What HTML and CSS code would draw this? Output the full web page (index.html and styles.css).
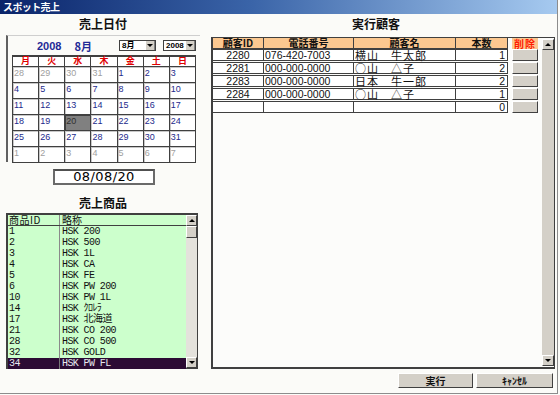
FILE: index.html
```html
<!DOCTYPE html>
<html lang="ja">
<head>
<meta charset="utf-8">
<title>スポット売上</title>
<link rel="stylesheet" href="styles.css">
</head>
<body>
<div class="window">
  <div class="titlebar">スポット売上</div>
  <div class="content">
    <div class="left">
      <h2 class="heading">売上日付</h2>
      <div class="calendar">
        <div class="cal-top">
          <span class="cal-year">2008</span>
          <span class="cal-month">8月</span>
          <div class="select sel-month"><span class="sel-text">8月</span><span class="sel-btn"><span class="tri"></span></span></div>
          <div class="select sel-year"><span class="sel-text">2008</span><span class="sel-btn"><span class="tri"></span></span></div>
        </div>
        <table class="cal-grid">
          <thead>
            <tr><th>月</th><th>火</th><th>水</th><th>木</th><th>金</th><th>土</th><th>日</th></tr>
          </thead>
          <tbody>
            <tr><td class="other">28</td><td class="other">29</td><td class="other">30</td><td class="other">31</td><td>1</td><td>2</td><td>3</td></tr>
            <tr><td>4</td><td>5</td><td>6</td><td>7</td><td>8</td><td>9</td><td>10</td></tr>
            <tr><td>11</td><td>12</td><td>13</td><td>14</td><td>15</td><td>16</td><td>17</td></tr>
            <tr><td>18</td><td>19</td><td class="sel">20</td><td>21</td><td>22</td><td>23</td><td>24</td></tr>
            <tr><td>25</td><td>26</td><td>27</td><td>28</td><td>29</td><td>30</td><td>31</td></tr>
            <tr><td class="other">1</td><td class="other">2</td><td class="other">3</td><td class="other">4</td><td class="other">5</td><td class="other">6</td><td class="other">7</td></tr>
          </tbody>
        </table>
      </div>
      <div class="datebox">08/08/20</div>
      <h2 class="heading heading-2">売上商品</h2>
      <div class="plist">
        <div class="plist-body">
          <div class="prow phead"><span class="pid">商品ID</span><span class="pname">略称</span></div>
          <div class="prow"><span class="pid">1</span><span class="pname">HSK 200</span></div>
          <div class="prow"><span class="pid">2</span><span class="pname">HSK 500</span></div>
          <div class="prow"><span class="pid">3</span><span class="pname">HSK 1L</span></div>
          <div class="prow"><span class="pid">4</span><span class="pname">HSK CA</span></div>
          <div class="prow"><span class="pid">5</span><span class="pname">HSK FE</span></div>
          <div class="prow"><span class="pid">6</span><span class="pname">HSK PW 200</span></div>
          <div class="prow"><span class="pid">10</span><span class="pname">HSK PW 1L</span></div>
          <div class="prow"><span class="pid">14</span><span class="pname">HSK ｸﾛﾚﾗ</span></div>
          <div class="prow"><span class="pid">17</span><span class="pname">HSK 北海道</span></div>
          <div class="prow"><span class="pid">21</span><span class="pname">HSK CO 200</span></div>
          <div class="prow"><span class="pid">28</span><span class="pname">HSK CO 500</span></div>
          <div class="prow"><span class="pid">32</span><span class="pname">HSK GOLD</span></div>
          <div class="prow selected"><span class="pid">34</span><span class="pname">HSK PW FL</span></div>
        </div>
        <div class="vscroll">
          <div class="sbtn"><span class="tri up"></span></div>
          <div class="track"><div class="thumb"></div></div>
          <div class="sbtn"><span class="tri"></span></div>
        </div>
      </div>
    </div>
    <div class="right">
      <h2 class="heading">実行顧客</h2>
      <div class="cbox">
        <div class="cmain">
          <div class="crow chead">
            <span class="c c-id">顧客ID</span><span class="c c-tel">電話番号</span><span class="c c-name">顧客名</span><span class="c c-qty">本数</span>
            <span class="c-del"><span class="delhead">削除</span></span>
          </div>
          <div class="crow">
            <span class="c c-id">2280</span><span class="c c-tel">076-420-7003</span><span class="c c-name">横山　牛太郎</span><span class="c c-qty">1</span>
            <span class="c-del"><span class="delbtn"></span></span>
          </div>
          <div class="crow">
            <span class="c c-id">2281</span><span class="c c-tel">000-000-0000</span><span class="c c-name">○山　△子</span><span class="c c-qty">2</span>
            <span class="c-del"><span class="delbtn"></span></span>
          </div>
          <div class="crow">
            <span class="c c-id">2283</span><span class="c c-tel">000-000-0000</span><span class="c c-name">日本　牛一郎</span><span class="c c-qty">2</span>
            <span class="c-del"><span class="delbtn"></span></span>
          </div>
          <div class="crow">
            <span class="c c-id">2284</span><span class="c c-tel">000-000-0000</span><span class="c c-name">○山　△子</span><span class="c c-qty">1</span>
            <span class="c-del"><span class="delbtn"></span></span>
          </div>
          <div class="crow">
            <span class="c c-id"></span><span class="c c-tel"></span><span class="c c-name"></span><span class="c c-qty">0</span>
            <span class="c-del"><span class="delbtn"></span></span>
          </div>
        </div>
        <div class="vscroll cscroll">
          <div class="sbtn"><span class="tri up"></span></div>
          <div class="track"></div>
          <div class="sbtn"><span class="tri"></span></div>
        </div>
      </div>
      <div class="actions">
        <button class="btn btn-run">実行</button>
        <button class="btn btn-cancel">ｷｬﾝｾﾙ</button>
      </div>
    </div>
  </div>
</div>
</body>
</html>
```
FILE: styles.css
```css
* { box-sizing: border-box; }
html, body { margin: 0; padding: 0; background: #fbfbf8; }
body {
  width: 560px; height: 395px; overflow: hidden;
  font-family: "Liberation Sans", "Noto Sans CJK JP", sans-serif;
}
.window {
  width: 558px; height: 394px;
  border-right: 1px solid #8c8c8c;
  border-bottom: 1px solid #8c8c8c;
  background: #fbfbf8;
  display: flex; flex-direction: column;
}
.titlebar {
  height: 14px;
  background: linear-gradient(to right, #0a246a 0%, #3a64a8 45%, #a6caf0 100%);
  color: #fff;
  font-family: "Noto Sans CJK JP", sans-serif;
  font-weight: bold;
  font-size: 10px;
  line-height: 14px;
  padding-left: 3px;
  letter-spacing: -0.6px;
}
.content { display: flex; flex: 1; }
.left { width: 211px; padding-left: 6px; display: flex; flex-direction: column; }
.right { width: 346px; display: flex; flex-direction: column; }

.heading {
  margin: 2px 0 3px;
  height: 16px;
  font-family: "Noto Sans CJK JP", sans-serif;
  font-size: 12px; line-height: 16px;
  font-weight: bold;
  text-align: center;
  color: #111;
}
.left .heading { width: 194px; }
.heading-2 { margin-top: 10px; margin-bottom: 2px; }
.right .heading { width: 330px; margin-bottom: 5px; }

/* Calendar */
.calendar {
  width: 194px; height: 127px;
  border-left: 2px solid #606060;
  border-top: 1px solid #cfcfcf;
  padding-left: 4px;
}
.cal-top { height: 19px; display: flex; align-items: center; }
.cal-year, .cal-month {
  color: #1f2a96; font-weight: bold; font-size: 11px;
  font-family: "Liberation Sans", "Noto Sans CJK JP", sans-serif;
}
.cal-year { margin-left: 25px; }
.cal-month { margin-left: 13px; font-family: "Noto Sans CJK JP", sans-serif; line-height: 14px; }
.select {
  height: 11px; display: flex; background: #fff;
  border: 1px solid #404040;
  font-size: 8px; font-weight: bold; line-height: 9px;
  font-family: "Liberation Sans", "Noto Sans CJK JP", sans-serif;
}
.sel-month { width: 37px; margin-left: 27px; }
.sel-year { width: 33px; margin-left: 7px; }
.sel-text { flex: 1; padding-left: 2px; }
.sel-btn {
  width: 10px; background: #d4d0c8;
  border-left: 1px solid #fff; border-right: 1px solid #808080;
  display: flex; align-items: center; justify-content: center;
}
.tri {
  width: 0; height: 0;
  border-left: 3px solid transparent; border-right: 3px solid transparent;
  border-top: 3px solid #000;
}
.tri.up { border-top: 0; border-bottom: 3px solid #000; }

.cal-grid {
  width: 184px; border-collapse: collapse; table-layout: fixed;
  background: #fff;
}
.cal-grid th {
  height: 10px; padding: 0;
  border: 1px solid #404040;
  border-top: 2px solid #404040;
  color: #e00000; font-size: 9px; line-height: 8px; font-weight: bold;
  font-family: "Noto Sans CJK JP", sans-serif;
}
.cal-grid td {
  height: 16px; padding: 1px 0 0 1px;
  border: 1px solid #404040;
  box-shadow: inset 1px 1px 0 #c8c8c8;
  color: #1c2a8c; font-size: 9px; line-height: 10px;
  vertical-align: top;
}
.cal-grid td.other { color: #a0a0a0; }
.cal-grid td.sel { background: #808080; color: #303030; box-shadow: inset 1px 1px 0 #404040; }

.datebox {
  width: 102px; height: 16px;
  margin: 7px 0 0 47px;
  border: 2px solid #6a6a6a;
  border-top-color: #505050;
  background: #fff;
  text-align: center;
  font-size: 13px; line-height: 12px;
  font-family: "DejaVu Sans", sans-serif;
  letter-spacing: 0.4px;
}

/* Product list */
.plist {
  width: 192px; height: 156px;
  border: 1px solid #404040;
  border-left-width: 2px; border-top-width: 2px;
  display: flex; background: #ccffcc;
}
.plist-body { flex: 1; }
.prow {
  height: 11px; display: flex;
  font-family: "Liberation Mono", "Noto Sans CJK JP", monospace;
  font-size: 10px; line-height: 11px;
  letter-spacing: -0.6px;
  color: #111;
}
.pid { width: 52px; padding-left: 1px; border-right: 1px solid #8a8a8a; }
.pname { flex: 1; padding-left: 2px; }
.phead { border-bottom: 1px solid #404040; }
.phead span { font-family: "Noto Sans CJK JP", sans-serif; font-size: 10px; line-height: 10px; letter-spacing: 0; }
.phead .pid { letter-spacing: 0.5px; }
.prow.selected { background: #2c0b34; color: #e8e8f0; }
.prow.selected .pid { border-right-color: #777; }

.vscroll {
  width: 11px; display: flex; flex-direction: column;
  background: #e4e2dc;
}
.sbtn {
  height: 11px; background: #d4d0c8;
  border: 1px solid; border-color: #fff #404040 #404040 #fff;
  display: flex; align-items: center; justify-content: center;
}
.track { flex: 1; }
.thumb {
  height: 12px; background: #d4d0c8;
  border: 1px solid; border-color: #fff #404040 #404040 #fff;
}

/* Customer box */
.cbox {
  width: 344px; height: 332px;
  border: 1px solid #404040;
  border-left-width: 2px; border-bottom-width: 2px;
  background: #fcfcfa;
  display: flex;
}
.cmain { width: 328px; display: flex; flex-direction: column; }
.crow { display: flex; height: 12px; margin-bottom: 1px; }
.c {
  height: 12px;
  background: #fff;
  border-left: 1px solid #404040;
  border-top: 1px solid #404040;
  border-bottom: 1px solid #404040;
  font-size: 10.5px; line-height: 10px;
  font-family: "Liberation Sans", "Noto Sans CJK JP", sans-serif;
  color: #111; white-space: nowrap;
}
.c-id { width: 50px; border-left: 0; text-align: center; }
.c-tel { width: 90px; padding-left: 1px; }
.c-name {
  width: 102px; padding-left: 1px;
  font-family: "Noto Sans CJK JP", sans-serif;
  font-size: 11px; letter-spacing: 1px;
}
.c-qty { width: 53px; text-align: right; padding-right: 2px; border-right: 1px solid #404040; }
.chead { height: 11px; margin-bottom: 0; }
.chead .c {
  height: 11px; background: #fcc890;
  border-top: 0;
  font-family: "Noto Sans CJK JP", serif;
  font-weight: bold; font-size: 10px; line-height: 10px;
  text-align: center; padding: 0; letter-spacing: 0;
}
.c-del { width: 30px; padding-left: 4px; display: flex; }
.delhead {
  width: 26px; height: 11px; background: #fcc890;
  color: #ff1a00; font-weight: bold; font-size: 10px; line-height: 11px;
  font-family: "Noto Sans CJK JP", sans-serif;
  text-align: center; letter-spacing: 1px;
}
.delbtn {
  width: 26px; height: 12px;
  background: #d4d0c8;
  border: 1px solid; border-color: #fff #404040 #404040 #fff;
}
.cscroll { width: 12px; margin-left: 1px; margin-top: 1px; margin-bottom: 1px; background: #d4d0c8; }

.actions { display: flex; justify-content: flex-end; gap: 3px; margin-top: 4px; width: 342px; }
.btn {
  height: 15px; padding: 0;
  background: #d4d0c8;
  border: 1px solid; border-color: #fff #404040 #404040 #fff;
  font-family: "Noto Sans CJK JP", sans-serif;
  font-weight: bold; font-size: 10px; line-height: 12px;
  color: #111;
}
.btn-run { width: 75px; }
.btn-cancel { width: 77px; }
```
